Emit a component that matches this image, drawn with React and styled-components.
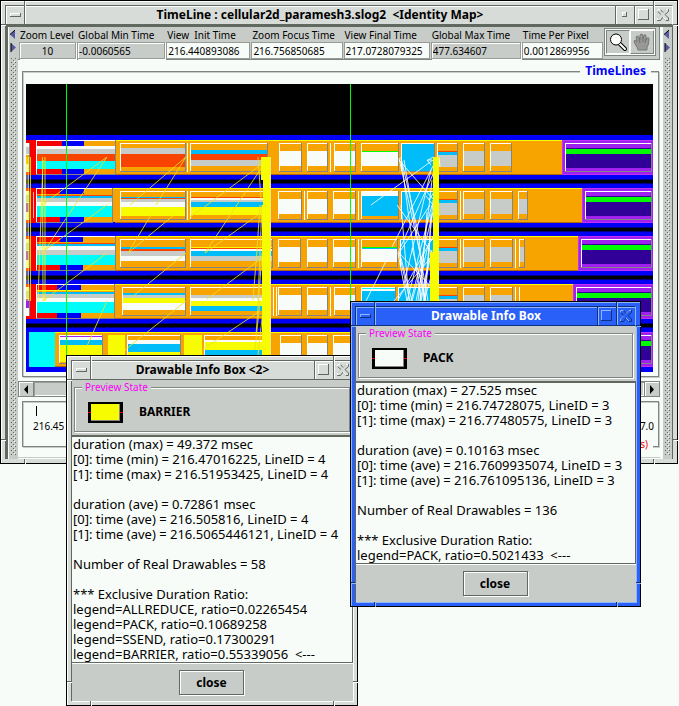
import React from "react";
import styled, { createGlobalStyle, css } from "styled-components";

const paper = "#f8fcf8";
const gray = "#c8ccc8";
const frame = "#d8dcd8";
const dark = "#606860";

const Global = createGlobalStyle`
  * { box-sizing: border-box; }
  body {
    margin: 0;
    background: ${paper};
    color: #000;
    font: 10px/12px "Noto Sans", sans-serif;
  }
  button, input, textarea { font: inherit; color: inherit; border-radius: 0; }
`;

const Desktop = styled.div`
  position: relative;
  min-height: 706px;
  overflow: hidden;
`;

/* ---------- window frame ---------- */

const activeSkin = css`
  --face: #2860f8;
  --light: #90b8f8;
  --shade: #103080;
  --title: #fff;
`;
const idleSkin = css`
  --face: ${frame};
  --light: #fff;
  --shade: ${dark};
  --title: #000;
`;

const WindowBox = styled.section`
  ${(p) => (p.$active ? activeSkin : idleSkin)}
  position: relative;
  border: 1px solid #000;
  padding: 4px;
  background: var(--face);
  box-shadow: inset 1px 1px 0 var(--light);
`;

const MainWindow = styled(WindowBox)`
  margin-right: 1px;
`;

const DialogWindow = styled(WindowBox)`
  position: absolute;
  left: ${(p) => p.$x}px;
  top: ${(p) => p.$y}px;
  width: ${(p) => p.$w}px;
`;

const TitleBar = styled.header`
  display: flex;
  height: 20px;
  border: 1px solid var(--shade);
  border-right-color: var(--light);
  color: var(--title);
`;

const TitleText = styled.h1`
  flex: 1;
  margin: 0;
  text-align: center;
  white-space: pre;
  font-size: 12px;
  line-height: 18px;
  font-weight: 700;
  box-shadow: inset 1px 1px 0 var(--light);
`;

const TitleButton = styled.button`
  width: 19px;
  padding: 0;
  border: 0;
  border-left: ${(p) => (p.$first ? 0 : 1)}px solid var(--shade);
  border-right: ${(p) => (p.$first ? 1 : 0)}px solid var(--shade);
  background: var(--face);
  box-shadow: inset 1px 1px 0 var(--light);
  svg { display: block; margin: auto; }
`;

const Notch = styled.i`
  position: absolute;
  background: var(--shade);
  box-shadow: 1px 1px 0 var(--light);
  ${(p) =>
    p.$axis === "x"
      ? css`width: 1px; height: 4px; ${p.$side}: 0; ${p.$end}: 23px;`
      : css`height: 1px; width: 4px; ${p.$side}: 0; ${p.$end}: 23px;`}
`;

function Notches() {
  return (
    <>
      {["top", "bottom"].map((s) =>
        ["left", "right"].map((e) => <Notch key={s + e} $axis="x" $side={s} $end={e} />)
      )}
      {["left", "right"].map((s) =>
        ["top", "bottom"].map((e) => <Notch key={s + e} $axis="y" $side={s} $end={e} />)
      )}
    </>
  );
}

function Glyph({ kind }) {
  return (
    <svg width="18" height="18" viewBox="0 0 18 18" fill="none" shapeRendering="crispEdges">
      {kind === "menu" && (
        <>
          <path d="M4.5 10V7.5H14" stroke="var(--light)" />
          <path d="M4 10.5H14.5V7" stroke="var(--shade)" />
        </>
      )}
      {kind === "min" && (
        <>
          <path d="M6.5 11V6.5H11" stroke="var(--light)" />
          <path d="M6 10.5H10.5V6" stroke="var(--shade)" />
        </>
      )}
      {kind === "max" && (
        <>
          <path d="M3.5 14V3.5H14" stroke="var(--light)" />
          <path d="M3 13.5H13.5V3" stroke="var(--shade)" />
        </>
      )}
      {kind === "close" && (
        <>
          <path d="M3.500 3.500H6.500L9 6.500L12 3.500H14.500V5.500L11 8.500L14.500 12V14.500H12L9 11L6.500 14.500H3.500V12L7 8.500L3.500 5.500Z" stroke="var(--shade)" shapeRendering="auto" />
          <path d="M3.500 5.500V3.500H6.500M9 6.500L12 3.500H14M3.500 14V12L7 8.500M9 11L12 14" stroke="var(--light)" shapeRendering="auto" />
        </>
      )}
    </svg>
  );
}

function Title({ text, buttons }) {
  return (
    <TitleBar>
      <TitleButton $first aria-label="Window menu"><Glyph kind="menu" /></TitleButton>
      <TitleText>{text}</TitleText>
      {buttons.map((b) => (
        <TitleButton key={b} aria-label={b}><Glyph kind={b} /></TitleButton>
      ))}
    </TitleBar>
  );
}

/* ---------- main window ---------- */

const Body = styled.div`
  display: flex;
  border: solid ${dark};
  border-width: 2px 1px 0 3px;
  background: ${paper};
`;

const SplitBar = styled.div`
  width: 10px;
  flex: none;
  display: flex;
  flex-direction: column;
  gap: 4px;
  padding-top: 3px;
  background: ${gray};
  box-shadow: inset 1px 0 0 ${paper};
`;

const SplitButton = styled.button`
  padding: 0;
  border: 0;
  background: none;
  height: 9px;
  svg { display: block; margin: auto; }
`;

const Grip = styled.div`
  flex: 1;
  margin: 2px 2px 3px 3px;
  background-image:
    conic-gradient(from 270deg at 1px 1px, ${dark} 90deg, transparent 0),
    conic-gradient(from 270deg at 1px 1px, ${dark} 90deg, transparent 0),
    conic-gradient(from 270deg at 1px 1px, #fff 90deg, transparent 0);
  background-size: 4px 4px;
  background-position: 0 0, 2px 2px, 3px 3px;
`;

function Split() {
  return (
    <SplitBar>
      <SplitButton aria-label="Collapse left">
        <svg width="6" height="9"><path d="M5 0V9L0 4.5Z" fill="#5858a0" /><path d="M5 0L0 4.5" stroke="#000" /></svg>
      </SplitButton>
      <SplitButton aria-label="Collapse right">
        <svg width="6" height="9"><path d="M1 0V9L6 4.5Z" fill="#5858a0" /><path d="M1 0V9" stroke="#000" /></svg>
      </SplitButton>
      <Grip />
    </SplitBar>
  );
}

const Content = styled.main`
  flex: 1;
  min-width: 0;
  margin-right: 2px;
  display: flex;
  flex-direction: column;
`;

const Toolbar = styled.div`
  display: flex;
  align-items: flex-start;
  gap: 1px;
  height: 33px;
  padding: 1px 3px 1px 1px;
  background: ${gray};
  border-bottom: 1px solid #808480;
  border-right: 1px solid #808480;
`;

const Field = styled.label`
  flex: ${(p) => p.$grow} 1 0;
  min-width: 0;
  white-space: pre;
  padding-top: 1px;
  line-height: 13px;
  text-indent: 1px;
`;

const FieldInput = styled.input`
  display: block;
  width: 100%;
  height: 17px;
  padding: 0 1px;
  border: 1px solid #989c98;
  background: ${(p) => (p.$locked ? gray : paper)};
  box-shadow: ${(p) => (p.$locked ? "inset 1px 1px 0 #fff, 1px 1px 0 #fff" : `inset 0 0 0 1px ${paper}`)};
  text-align: ${(p) => (p.$center ? "center" : "left")};
  outline: none;
`;

const ToolGroup = styled.div`
  display: flex;
  height: 28px;
  padding: 1px;
  border: 1px solid #808480;
  background: ${paper};
`;

const Tool = styled.button`
  width: 24px;
  padding: 0;
  border: 1px solid;
  border-color: ${(p) => (p.$on ? "#808480 #fff #fff #808480" : "#fff #808480 #808480 #fff")};
  background: ${gray};
  svg { display: block; margin: auto; }
`;

const Panel = styled.fieldset`
  margin: 4px 1px 0 4px;
  min-width: 0;
  padding: 6px 5px 4px 3px;
  border: 1px solid #808480;
  box-shadow: 1px 1px 0 ${gray}, inset 1px 1px 0 ${gray};
`;

const PanelTitle = styled.legend`
  margin: 0 2px 0 auto;
  padding: 0 5px;
  background: ${paper};
  color: #0000f8;
  font-size: 12px;
  line-height: 14px;
  font-weight: 700;
`;

const Canvas = styled.svg`
  display: block;
  width: 100%;
  height: 288px;
`;

const ScrollBar = styled.div`
  display: flex;
  height: 16px;
  margin-top: 4px;
  background: ${gray};
  border: 1px solid #808480;
`;

const ScrollButton = styled.button`
  width: 15px;
  padding: 0;
  border: solid #808480;
  border-width: 0 ${(p) => (p.$left ? 1 : 0)}px 0 ${(p) => (p.$left ? 0 : 1)}px;
  background: ${gray};
  box-shadow: inset 1px 1px 0 #fff;
  svg { display: block; margin: auto; }
`;

const ScrollTrack = styled.div`
  flex: 1;
  box-shadow: inset 1px 1px 0 #989c98, inset -1px -1px 0 #fff;
`;

const Ruler = styled.div`
  position: relative;
  display: flex;
  justify-content: space-between;
  height: 46px;
  margin: 4px 1px 10px 4px;
  padding: 4px 4px 0 10px;
  border: 1px solid #808480;
  box-shadow: 1px 1px 0 ${gray}, inset 1px 1px 0 ${gray};
`;

const RulerMark = styled.span`
  white-space: nowrap;
  line-height: 14px;
  &::before {
    content: "";
    display: block;
    width: 1px;
    height: 10px;
    margin: 0 3px 3px;
    background: #000;
  }
`;

const RulerCaption = styled.span`
  position: absolute;
  right: 5px;
  bottom: -4px;
  padding: 0 5px;
  background: ${paper};
  color: #f00000;
`;

const StatusLine = styled.div`
  height: 2px;
  border-top: 1px solid ${gray};
`;

/* ---------- timeline drawing ---------- */

const C = {
  o: "#f8a400", g: "#c8ccc8", w: "#f8fcf8", r: "#f84400", R: "#f80000", b: "#00bcf8",
  c: "#00fcf8", y: "#f8fc00", B: "#0000f8", p: "#a020f0", d: "#300098", G: "#00fc00",
};

function parse(bands) {
  return bands.split(" ").map((b) => [C[b[0]], Number(b.slice(1))]);
}

function State({ x1, x2, y, bands }) {
  let top = y + 4;
  return (
    <g>
      <rect x={x1} y={y + 3} width={x2 - x1} height="29" fill="#848484" />
      <rect x={x1} y={y + 3} width={x2 - x1 - 1} height="28" fill="#fff" />
      {parse(bands).map(([color, h], i) => {
        const at = top;
        top += h;
        return <rect key={i} x={x1 + 1} y={at} width={x2 - x1 - 2} height={h} fill={color} />;
      })}
    </g>
  );
}

function Aggregate({ x2, y, red, blue, bands }) {
  let top = y + 6;
  return (
    <g>
      <rect x="36" y={y} width={x2 - 35} height="35" fill="#848484" />
      <rect x="36" y={y} width={x2 - 36} height="34" fill="#fff" />
      {[[y + 1, 5], [y + 29, 5]].map(([sy, h]) => (
        <g key={sy}>
          <rect x="37" y={sy} width={x2 - 37} height={h} fill={C.o} />
          <rect x="37" y={sy} width={blue - 37} height={h} fill={C.B} />
          <rect x="37" y={sy} width={red - 37} height={h} fill={C.R} />
        </g>
      ))}
      {parse(bands).map(([color, h], i) => {
        const at = top;
        top += h;
        return <rect key={i} x="37" y={at} width={x2 - 37} height={h} fill={color} />;
      })}
    </g>
  );
}

const grayLast = "o7 g15 o5";
const grayMid = "o7 r1 b3 g12 o4";
const pack = "o7 w15 o5";

const rows = [
  {
    y: 140, agg: [115, 62, 84, "w3 g5 r7 c8"], purple: 562,
    states: [
      [120, 186, "o4 g6 r13 o4"], [190, 268, "o6 b4 r6 g6 o5"],
      [279, 302, pack], [307, 328, pack], [334, 356, pack],
      [361, 399, "o7 G1 w14 o5"], [401, 435, "b27"], [437, 458, grayMid], [463, 485, grayLast], [490, 512, grayLast],
    ],
    bars: [187, 330],
  },
  {
    y: 188, agg: [112, 60, 84, "o1 r1 b2 g4 w4 c11"], purple: 582,
    states: [
      [120, 186, "o5 b1 r1 g3 w5 y9 o3"], [190, 268, "o5 r1 w2 g2 b5 y8 o4"],
      [278, 302, pack], [307, 328, pack], [333, 356, pack],
      [361, 399, "w4 b20 o3"], [401, 434, "b27"], [437, 458, grayMid], [463, 485, grayLast], [490, 513, grayLast], [518, 528, grayLast],
    ],
    bars: [187, 304, 358, 460],
  },
  {
    y: 236, agg: [115, 60, 83, "o1 r1 b2 w4 g5 c10"], purple: 578,
    states: [
      [120, 186, "o7 b2 r2 g5 w5 o6"], [190, 273, "o7 y1 r1 w2 b5 g5 o6"],
      [278, 301, pack], [307, 328, pack], [333, 356, pack],
      [361, 398, "o7 G1 b1 w13 o5"], [400, 434, "b27"], [437, 458, grayMid], [463, 485, grayLast], [490, 513, grayLast], [519, 525, grayLast],
    ],
    bars: [358, 460, 515],
  },
  {
    y: 284, agg: [114, 57, 81, "y1 o1 b2 g4 w4 c11"], purple: 573,
    states: [
      [122, 186, "o5 b2 g3 y5 w7 o5"], [190, 268, "o7 g3 w3 y5 b5 o4"],
      [278, 302, pack], [307, 328, pack], [334, 356, pack],
      [361, 396, "c1 w2 b20 o4"], [398, 434, "b27"], [437, 458, grayMid], [463, 485, grayLast], [490, 513, grayLast],
    ],
    bars: [273, 276, 330, 515, 519],
  },
  {
    y: 332, purple: 578,
    states: [
      [59, 103, "p1 w3 b5 y17 o1"], [127, 181, "o4 w4 b8 y11"], [204, 270, "o4 w2 y8 b13"],
      [280, 302, pack], [307, 328, pack], [333, 356, pack],
    ],
    bars: [],
  },
];

const yellowLinks =
  "M107 157L42 205M107 157L45 250M107 205L45 250M107 253L43 301M107 301L87 346" +
  "M186 157L130 205M186 157L156 205M151 215L128 253M174 215L128 253M186 253L132 297M186 301L125 350" +
  "M262 164L207 205L190 217M262 167L205 253M262 212L205 253M262 258L207 299M260 311L203 349" +
  "M258 157L261 200M260 205L257 250L253 300M262 205L258 300M262 253L256 335M260 300L255 350M263 310L258 355";
const whiteLinks =
  "M433 160L371 205M399 158L420 253M401 157L408 211L421 300M399 160L433 199M397 205L432 253M401 205L409 301" +
  "M433 166L392 247M431 170L404 284M434 172L398 253M430 205L399 253L410 301M432 205L407 301M433 212L411 301" +
  "M386 261L366 301M433 255L394 301M434 235L398 300M401 158L419 236L424 301M404 160L428 301M432 180L418 301" +
  "M399 253L434 290M398 253L407 301M401 258L412 301M433 200L425 301M426 196L433 205M427 212L420 301" +
  "M431 214L428 265L420 301M430 236L424 301M428 245L416 301M432 250L421 301M433 270L424 301M412 248L426 301M424 258L412 301" +
  "M427 161L433 157M439 157L440 167M428 244L434 238M429 200L434 192M437 205L439 216M431 165L427 160H432";

function TimelineCanvas() {
  return (
    <Canvas viewBox="26 84 627 288" preserveAspectRatio="none" role="img" aria-label="Timelines">
      <g shapeRendering="crispEdges">
        <rect x="26" y="84" width="627" height="51" fill="#000" />
        <rect x="26" y="135" width="627" height="237" fill={C.B} />
        {rows.map((r, i) => (
          <g key={r.y}>
            {i < 4 && <rect x="26" y={r.y + 39} width="627" height="5" fill="#000080" />}
            {i < 4 && <rect x="26" y={r.y + 40} width="627" height="3" fill="#000" />}
            <rect x={i === 4 ? 55 : 115} y={r.y} width="600" height="35" fill="#b06810" />
            <rect x={i === 4 ? 55 : r.agg[0]} y={r.y} width="600" height="34" fill={C.o} />
            <rect x={i === 4 ? 55 : r.agg[0]} y={r.y} width="600" height="1" fill={C.y} />
            {r.agg ? (
              <>
                <rect x="26" y={r.y} width="10" height="35" fill={C.R} />
                <rect x="26" y={r.y + 3} width="3" height="29" fill={C.w} />
                <rect x="26" y={r.y + 7} width="3" height="7" fill={C.g} />
                <rect x="26" y={r.y + 15} width="3" height="9" fill={i === 0 ? C.o : C.p} />
                <rect x="29" y={r.y + 3} width="1" height="29" fill="#848484" />
                <Aggregate x2={r.agg[0]} y={r.y} red={r.agg[1]} blue={r.agg[2]} bands={r.agg[3]} />
              </>
            ) : (
              <>
                <rect x="29" y="332" width="26" height="35" fill={C.c} />
                <rect x="108" y="335" width="17" height="29" fill={C.y} />
                <rect x="184" y="335" width="18" height="29" fill={C.y} />
              </>
            )}
            {r.states.map(([a, b, bands]) => (
              <State key={a} x1={a} x2={b} y={r.y} bands={bands} />
            ))}
            {r.bars.map((x) => (
              <rect key={x} x={x} y={r.y + 3} width="1" height="29" fill="#fff" />
            ))}
            <rect x={r.purple} y={r.y} width={653 - r.purple} height="35" fill="#c030f8" />
            <rect x={r.purple + 1} y={r.y + 1} width={653 - r.purple} height="33" fill={C.p} />
            <State x1={r.purple + 3} x2={652} y={r.y} bands="p4 d1 G5 d14 p3" />
          </g>
        ))}
        <path d="M33.500 192V218" stroke="#fff" strokeOpacity=".7" />
      </g>
      <path d="M27 157V301M28.500 157V301M30.500 157V301M42.500 157L43 301M45 157V301M43 160L38 301" fill="none" stroke={C.y} strokeOpacity=".8" />
      <path d={yellowLinks} fill="none" stroke="#f0e020" strokeOpacity=".85" />
      <g shapeRendering="crispEdges">
        <path d="M261 157H269V372H262V205H263V180H261Z" fill={C.y} />
        <rect x="269" y="157" width="1" height="215" fill={C.y} />
        <rect x="270" y="157" width="1" height="215" fill="#f8e880" />
      </g>
      <path d={whiteLinks} fill="none" stroke="#fff" strokeOpacity=".85" />
      <g shapeRendering="crispEdges">
        <path d="M433 157H439V310H430V252H433Z" fill={C.y} />
        <rect x="66" y="84" width="1" height="288" fill={C.G} />
        <rect x="350" y="84" width="1" height="288" fill={C.G} />
      </g>
    </Canvas>
  );
}

const fields = [
  { label: "Zoom Level", value: "10", grow: 57, locked: true, center: true },
  { label: "Global Min Time", value: "-0.0060565", grow: 88, locked: true },
  { label: "View  Init Time", value: "216.440893086", grow: 84 },
  { label: "Zoom Focus Time", value: "216.756850685", grow: 91 },
  { label: "View Final Time", value: "217.0728079325", grow: 86 },
  { label: "Global Max Time", value: "477.634607", grow: 90, locked: true },
  { label: "Time Per Pixel", value: "0.0012869956", grow: 81 },
];

/* ---------- info dialogs ---------- */

const DialogBody = styled.div`
  padding-top: 1px;
  background: ${gray};
  border-left: 1px solid ${dark};
  box-shadow: 1px 1px 0 var(--light);
`;

const Preview = styled.fieldset`
  min-width: 0;
  margin: 0 3px 3px 2px;
  padding: 8px 13px;
  border: 1px solid #808480;
  box-shadow: 1px 1px 0 #fff, inset 1px 1px 0 #fff;
`;

const PreviewTitle = styled.legend`
  margin-left: -6px;
  padding: 0 3px;
  background: ${gray};
  color: #f800f8;
`;

const PreviewRow = styled.div`
  display: flex;
  align-items: center;
  gap: 16px;
  font-size: 12px;
  line-height: 22px;
  font-weight: 700;
`;

const InfoText = styled.textarea`
  display: block;
  width: 100%;
  padding: 0 0 0 1px;
  margin: 0;
  border: solid ${dark};
  border-width: 2px 1px 1px 0;
  background: ${paper};
  font-size: 13px;
  line-height: 15px;
  white-space: pre;
  overflow: hidden;
  resize: none;
  outline: none;
`;

const ButtonRow = styled.div`
  display: flex;
  justify-content: center;
  padding: 6px 2px 6px 0;
  border-top: 1px solid #fff;
`;

const CloseButton = styled.button`
  width: 65px;
  height: 25px;
  padding: 0;
  border: 1px solid ${dark};
  background: ${gray};
  box-shadow: inset 1px 1px 0 #fff, 1px 1px 0 #fff;
  font-size: 12px;
  font-weight: 700;
`;

function InfoDialog({ title, active, x, y, w, name, color, lines }) {
  return (
    <DialogWindow $active={active} $x={x} $y={y} $w={w} aria-label={title}>
      <Notches />
      <Title text={title} buttons={["max", "close"]} />
      <DialogBody>
        <Preview>
          <PreviewTitle>Preview State</PreviewTitle>
          <PreviewRow>
            <svg width="35" height="21" viewBox="0 0 35 21" shapeRendering="crispEdges" aria-hidden="true">
              <rect width="35" height="21" fill="#000" />
              <rect x="3" y="2" width="29" height="17" fill="#848484" />
              <rect x="3" y="2" width="28" height="16" fill={color} />
              <path d="M0 10.500H3M32 10.500H35" stroke="#f00000" />
            </svg>
            {name}
          </PreviewRow>
        </Preview>
        <InfoText readOnly aria-label={`${name} details`} rows={lines.length} value={lines.join("\n")} />
        <ButtonRow><CloseButton>close</CloseButton></ButtonRow>
      </DialogBody>
    </DialogWindow>
  );
}

const barrierLines = [
  "duration (max) = 49.372 msec",
  "[0]: time (min) = 216.47016225, LineID = 4",
  "[1]: time (max) = 216.51953425, LineID = 4",
  "",
  "duration (ave) = 0.72861 msec",
  "[0]: time (ave) = 216.505816, LineID = 4",
  "[1]: time (ave) = 216.5065446121, LineID = 4",
  "",
  "Number of Real Drawables = 58",
  "",
  "*** Exclusive Duration Ratio:",
  "legend=ALLREDUCE, ratio=0.02265454",
  "legend=PACK, ratio=0.10689258",
  "legend=SSEND, ratio=0.17300291",
  "legend=BARRIER, ratio=0.55339056  <---",
];

const packLines = [
  "duration (max) = 27.525 msec",
  "[0]: time (min) = 216.74728075, LineID = 3",
  "[1]: time (max) = 216.77480575, LineID = 3",
  "",
  "duration (ave) = 0.10163 msec",
  "[0]: time (ave) = 216.7609935074, LineID = 3",
  "[1]: time (ave) = 216.761095136, LineID = 3",
  "",
  "Number of Real Drawables = 136",
  "",
  "*** Exclusive Duration Ratio:",
  "legend=PACK, ratio=0.5021433  <---",
];

export default function App() {
  return (
    <Desktop>
      <Global />
      <MainWindow aria-label="TimeLine">
        <Notches />
        <Title
          text="TimeLine : cellular2d_paramesh3.slog2  <Identity Map>"
          buttons={["min", "max", "close"]}
        />
        <Body>
          <Split />
          <Content>
            <Toolbar>
              {fields.map((f) => (
                <Field key={f.label} $grow={f.grow}>
                  {f.label}
                  <FieldInput defaultValue={f.value} readOnly={f.locked} $locked={f.locked} $center={f.center} />
                </Field>
              ))}
              <ToolGroup>
                <Tool $on aria-label="Zoom">
                  <svg width="20" height="20" viewBox="0 0 20 20">
                    <path d="M11 11L17 17" stroke="#000" strokeWidth="4" strokeLinecap="round" />
                    <path d="M11.500 11.500L17 17" stroke="#fff" strokeWidth="2" strokeLinecap="round" />
                    <circle cx="8" cy="7.500" r="5.500" fill="#fff" stroke="#000" />
                  </svg>
                </Tool>
                <Tool aria-label="Pan">
                  <svg width="20" height="20" viewBox="0 0 20 20">
                    <path
                      d="M6 18C6 15 2 12 2 9Q3 7 5 10L4 5Q5 3 7 5L8 8L8 3Q9 1 11 3V7L12 3Q14 2 14 4V8L15 6Q17 5 17 7Q17 13 15 15V18Z"
                      fill="#989898" stroke="#787878"
                    />
                    <path d="M7 6L8 11M11 5V10M14 7L13 11" stroke="#707070" fill="none" />
                  </svg>
                </Tool>
              </ToolGroup>
            </Toolbar>
            <Panel>
              <PanelTitle>TimeLines</PanelTitle>
              <TimelineCanvas />
            </Panel>
            <ScrollBar>
              <ScrollButton $left aria-label="Scroll left">
                <svg width="6" height="9"><path d="M5 0V9L1 4.500Z" /></svg>
              </ScrollButton>
              <ScrollTrack />
              <ScrollButton aria-label="Scroll right">
                <svg width="6" height="9"><path d="M1 0V9L5 4.500Z" /></svg>
              </ScrollButton>
            </ScrollBar>
            <Ruler>
              <RulerMark>216.45</RulerMark>
              <RulerMark>217.0</RulerMark>
              <RulerCaption>Time (seconds)</RulerCaption>
            </Ruler>
            <StatusLine />
          </Content>
          <Split />
        </Body>
      </MainWindow>
      <InfoDialog
        title="Drawable Info Box <2>" x={66} y={355} w={292}
        name="BARRIER" color={C.y} lines={barrierLines}
      />
      <InfoDialog
        active title="Drawable Info Box" x={350} y={301} w={291}
        name="PACK" color={C.w} lines={packLines}
      />
    </Desktop>
  );
}
